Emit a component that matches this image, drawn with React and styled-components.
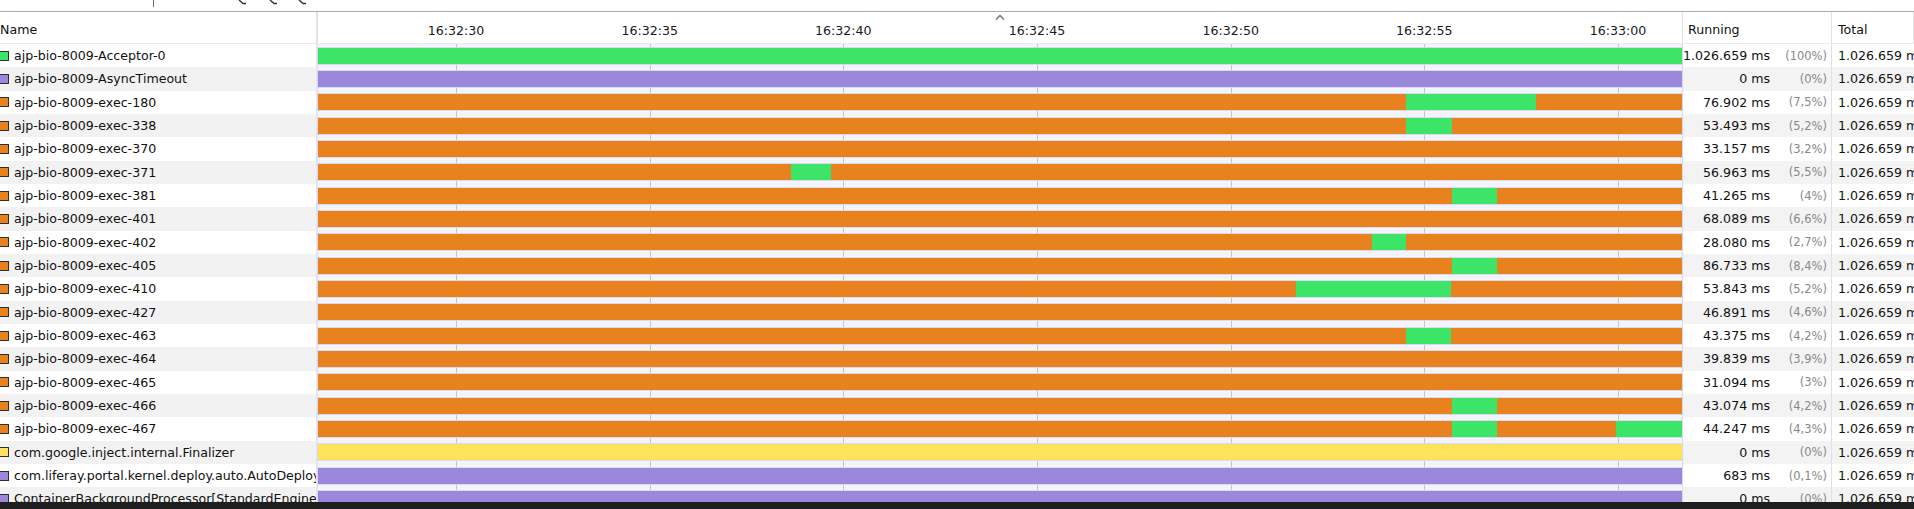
import React from 'react';
import styled, { createGlobalStyle } from 'styled-components';

const GlobalStyle = createGlobalStyle`
  html, body {
    margin: 0;
    padding: 0;
    background: #fff;
    overflow: hidden;
  }
  body {
    font-family: "DejaVu Sans", Verdana, sans-serif;
    font-size: 12.6px;
    color: #111;
  }
`;

const COLORS = {
  green: '#3ce467',
  purple: '#9b88dd',
  orange: '#e7821f',
  yellow: '#fde25d',
};

// timeline track is 1364px wide, positions below are in px inside it
const TRACK = 1364;
const TICKS = ['16:32:30', '16:32:35', '16:32:40', '16:32:45', '16:32:50', '16:32:55', '16:33:00'];
const TICK_START = 138;
const TICK_STEP = 193.67;

const ROWS = [
  { name: 'ajp-bio-8009-Acceptor-0', color: 'green', running: '1.026.659 ms', pct: '(100%)' },
  { name: 'ajp-bio-8009-AsyncTimeout', color: 'purple', running: '0 ms', pct: '(0%)' },
  { name: 'ajp-bio-8009-exec-180', color: 'orange', running: '76.902 ms', pct: '(7,5%)', green: [[1087.7, 1217.7]] },
  { name: 'ajp-bio-8009-exec-338', color: 'orange', running: '53.493 ms', pct: '(5,2%)', green: [[1087.7, 1133.7]] },
  { name: 'ajp-bio-8009-exec-370', color: 'orange', running: '33.157 ms', pct: '(3,2%)' },
  { name: 'ajp-bio-8009-exec-371', color: 'orange', running: '56.963 ms', pct: '(5,5%)', green: [[473.3, 513]] },
  { name: 'ajp-bio-8009-exec-381', color: 'orange', running: '41.265 ms', pct: '(4%)', green: [[1133.5, 1178.6]] },
  { name: 'ajp-bio-8009-exec-401', color: 'orange', running: '68.089 ms', pct: '(6,6%)' },
  { name: 'ajp-bio-8009-exec-402', color: 'orange', running: '28.080 ms', pct: '(2,7%)', green: [[1054, 1087.7]] },
  { name: 'ajp-bio-8009-exec-405', color: 'orange', running: '86.733 ms', pct: '(8,4%)', green: [[1133.5, 1178.6]] },
  { name: 'ajp-bio-8009-exec-410', color: 'orange', running: '53.843 ms', pct: '(5,2%)', green: [[978.4, 1133.5]] },
  { name: 'ajp-bio-8009-exec-427', color: 'orange', running: '46.891 ms', pct: '(4,6%)' },
  { name: 'ajp-bio-8009-exec-463', color: 'orange', running: '43.375 ms', pct: '(4,2%)', green: [[1087.7, 1133.5]] },
  { name: 'ajp-bio-8009-exec-464', color: 'orange', running: '39.839 ms', pct: '(3,9%)' },
  { name: 'ajp-bio-8009-exec-465', color: 'orange', running: '31.094 ms', pct: '(3%)' },
  { name: 'ajp-bio-8009-exec-466', color: 'orange', running: '43.074 ms', pct: '(4,2%)', green: [[1133.5, 1178.6]] },
  { name: 'ajp-bio-8009-exec-467', color: 'orange', running: '44.247 ms', pct: '(4,3%)', green: [[1133.5, 1178.6], [1297.7, 1364]] },
  { name: 'com.google.inject.internal.Finalizer', color: 'yellow', running: '0 ms', pct: '(0%)' },
  { name: 'com.liferay.portal.kernel.deploy.auto.AutoDeployScanner', color: 'purple', running: '683 ms', pct: '(0,1%)' },
  { name: 'ContainerBackgroundProcessor[StandardEngine[Catalina]]', color: 'purple', running: '0 ms', pct: '(0%)' },
];

const COLUMNS = '318px 1365px 149px 1fr';

const Page = styled.div`
  width: 1914px;
  height: 509px;
  display: flex;
  flex-direction: column;
  overflow: hidden;
`;

const TopStrip = styled.div`
  height: 11px;
  flex-shrink: 0;
  border-bottom: 1px solid #ababab;
  display: flex;
  align-items: flex-start;
`;

const ToolDivider = styled.div`
  margin-left: 153px;
  width: 1px;
  height: 7px;
  background: #6b6b6b;
`;

const ToolStub = styled.svg`
  margin-left: ${p => p.$gap}px;
  width: 9px;
  height: 5px;
  flex-shrink: 0;
`;

const Table = styled.div`
  flex: 1;
  display: flex;
  flex-direction: column;
  overflow: hidden;
`;

const HeaderRow = styled.div`
  display: grid;
  grid-template-columns: ${COLUMNS};
  height: 31px;
  flex-shrink: 0;
  border-bottom: 1px solid #ebebeb;
`;

const HeaderCell = styled.div`
  position: relative;
  display: flex;
  align-items: center;
  padding: 4px 0 0 ${p => p.$pad || 0}px;
  border-right: ${p => p.$line || 1}px solid #e3e3e3;
  white-space: nowrap;
  overflow: hidden;
`;

const TickLabel = styled.span`
  position: absolute;
  top: 11px;
  transform: translateX(-50%);
  color: #1a1a1a;
`;

const SortCaret = styled.svg`
  position: absolute;
  left: 50%;
  top: 2px;
  width: 10px;
  height: 6px;
  transform: translateX(-50%);
`;

const Body = styled.div`
  flex: 1;
  overflow: hidden;
`;

const Row = styled.div`
  display: grid;
  grid-template-columns: ${COLUMNS};
  height: 23.33px;
`;

const NameCell = styled.div`
  display: flex;
  align-items: center;
  gap: 5px;
  border-right: 2px solid #e4e4f3;
  background: ${p => (p.$alt ? '#f2f2f2' : '#fff')};
  white-space: nowrap;
  overflow: hidden;
`;

const Swatch = styled.span`
  flex-shrink: 0;
  box-sizing: border-box;
  width: 10px;
  height: 10px;
  margin-left: -1px;
  border: 1px solid #2e2e2e;
  background: ${p => COLORS[p.$color]};
`;

const TrackCell = styled.div`
  position: relative;
  display: flex;
  align-items: center;
  border-right: 1px solid #dcdcef;
  background: linear-gradient(#f1f1fa, #fff 30%, #fff 70%, #f1f1fa);
`;

const GridLine = styled.div`
  position: absolute;
  top: 0;
  bottom: 0;
  width: 1px;
  background: #c6c6c6;
`;

const Bar = styled.div`
  position: relative;
  z-index: 1;
  width: 100%;
  height: 16px;
  background: ${p => COLORS[p.$color]};
  box-shadow: 0 0 0 1px rgba(214, 214, 238, 0.9);
`;

const Segment = styled.div`
  position: absolute;
  top: 0;
  bottom: 0;
  background: ${p => COLORS[p.$color]};
`;

const RunningCell = styled.div`
  display: grid;
  grid-template-columns: 1fr 52px;
  column-gap: 5px;
  align-items: center;
  padding-right: 4px;
  border-right: 1px solid #dfdff0;
  background: ${p => (p.$alt ? '#f3f3f3' : '#fff')};
  white-space: nowrap;
`;

const Value = styled.span`
  text-align: right;
`;

const Percent = styled.span`
  text-align: right;
  color: #888;
  font-size: 11.5px;
`;

const TotalCell = styled.div`
  display: flex;
  align-items: center;
  padding-left: 6px;
  background: ${p => (p.$alt ? '#f3f3f3' : '#fff')};
  white-space: nowrap;
  overflow: hidden;
`;

const Taskbar = styled.div`
  height: 7px;
  flex-shrink: 0;
  background: #1e1e1e;
`;

const pct = px => `${(px / TRACK) * 100}%`;

function Stub({ gap }) {
  return (
    <ToolStub $gap={gap} viewBox="0 0 9 5">
      <polyline points="1,0 5,3.5 8,3.5" fill="none" stroke="#333" strokeWidth="1.4" />
    </ToolStub>
  );
}

export default function App() {
  return (
    <Page>
      <GlobalStyle />
      <TopStrip>
        <ToolDivider />
        <Stub gap={84} />
        <Stub gap={22} />
        <Stub gap={20} />
      </TopStrip>
      <Table>
        <HeaderRow>
          <HeaderCell $line={2}>Name</HeaderCell>
          <HeaderCell>
            <SortCaret viewBox="0 0 10 6">
              <polyline points="1,5.5 5,1.5 9,5.5" fill="none" stroke="#6e6e6e" strokeWidth="1.3" />
            </SortCaret>
            {TICKS.map((t, i) => (
              <TickLabel key={t} style={{ left: TICK_START + i * TICK_STEP }}>
                {t}
              </TickLabel>
            ))}
          </HeaderCell>
          <HeaderCell $pad={5}>Running</HeaderCell>
          <HeaderCell $pad={6}>Total</HeaderCell>
        </HeaderRow>
        <Body>
          {ROWS.map((r, i) => {
            const alt = i % 2 === 1;
            return (
              <Row key={r.name}>
                <NameCell $alt={alt}>
                  <Swatch $color={r.color} />
                  {r.name}
                </NameCell>
                <TrackCell>
                  {TICKS.map((t, k) => (
                    <GridLine key={t} style={{ left: TICK_START + k * TICK_STEP }} />
                  ))}
                  <Bar $color={r.color}>
                    {(r.green || []).map(([a, b]) => (
                      <Segment key={a} $color="green" style={{ left: pct(a), width: pct(b - a) }} />
                    ))}
                  </Bar>
                </TrackCell>
                <RunningCell $alt={alt}>
                  <Value>{r.running}</Value>
                  <Percent>{r.pct}</Percent>
                </RunningCell>
                <TotalCell $alt={alt}>1.026.659 ms</TotalCell>
              </Row>
            );
          })}
        </Body>
      </Table>
      <Taskbar />
    </Page>
  );
}
